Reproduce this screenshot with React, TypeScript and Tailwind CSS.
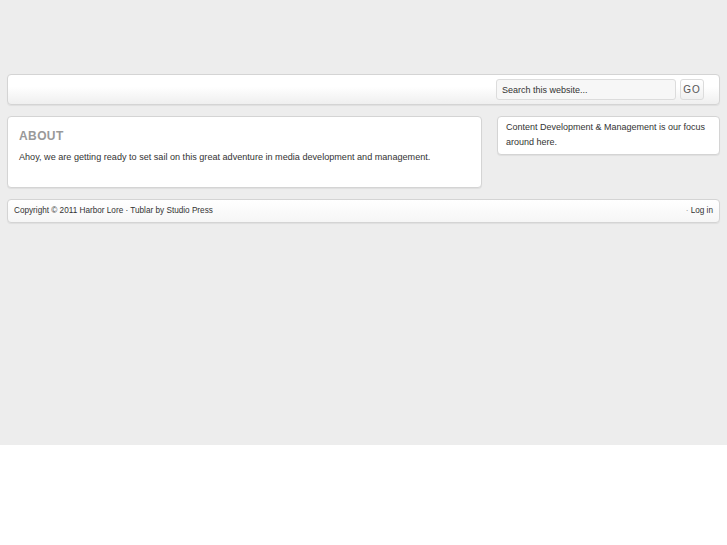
export default function App() {
  return (
    <div className="min-h-[545px] bg-white font-['Liberation_Sans',Arial,sans-serif]">
      <div className="h-[445px] bg-[#ededed] pt-[74px] px-[7px]">
        {/* Header */}
        <div className="h-[31px] w-[713px] rounded-[4px] border border-[#d4d4d4] bg-gradient-to-b from-white from-40% to-[#efefef] shadow-[0_1px_1px_rgba(0,0,0,0.06)] flex items-center justify-end pr-[15px]">
          <div className="flex items-center gap-[4px]">
            <input
              type="text"
              placeholder="Search this website..."
              className="w-[180px] h-[21px] rounded-[3px] border border-[#dcdcdc] bg-[#f7f7f7] px-[5px] text-[9px] text-[#333] placeholder-[#333] outline-none"
            />
            <button className="w-[24px] h-[21px] rounded-[3px] border border-[#dcdcdc] bg-gradient-to-b from-white to-[#f0f0f0] text-[10px] tracking-[1px] text-[#555] leading-none">
              GO
            </button>
          </div>
        </div>

        {/* Content */}
        <div className="mt-[11px] flex items-start gap-[15px]">
          <div className="w-[475px] h-[72px] rounded-[4px] border border-[#d4d4d4] bg-white px-[11px] pt-[12px] shadow-[0_1px_1px_rgba(0,0,0,0.06)]">
            <h2 className="text-[12px] font-bold tracking-[0.4px] text-[#999] leading-[15px]">ABOUT</h2>
            <p className="mt-[7px] text-[9.1px] leading-[12px] text-[#333]">
              Ahoy, we are getting ready to set sail on this great adventure in media development and management.
            </p>
          </div>
          <div className="w-[223px] h-[39px] rounded-[4px] border border-[#d4d4d4] bg-white px-[8px] pt-[3px] shadow-[0_1px_1px_rgba(0,0,0,0.06)]">
            <p className="text-[9px] leading-[15px] text-[#333]">
              Content Development &amp; Management is our focus around here.
            </p>
          </div>
        </div>

        {/* Footer */}
        <div className="mt-[11px] h-[24px] w-[713px] rounded-[4px] border border-[#d4d4d4] bg-gradient-to-b from-white to-[#f6f6f6] flex items-center justify-between px-[6px] pt-[1px] text-[8.2px] text-[#333] shadow-[0_1px_1px_rgba(0,0,0,0.06)]">
          <span>Copyright © 2011 Harbor Lore · Tublar by Studio Press</span>
          <span><span className="text-[#999]">·</span> Log in</span>
        </div>
      </div>
    </div>
  );
}
